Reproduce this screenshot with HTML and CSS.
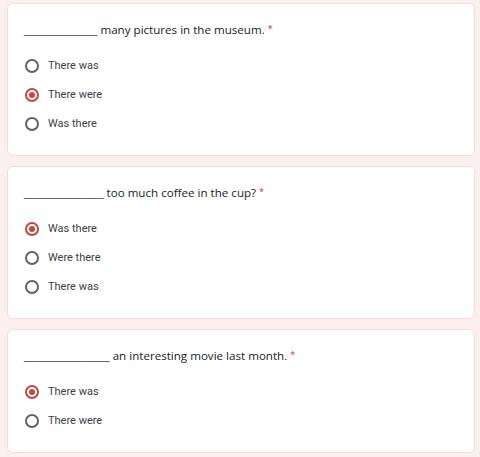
FILE: index.html
```html
<!DOCTYPE html>
<html>
<head>
<meta charset="utf-8">
<link rel="stylesheet" href="styles.css">
</head>
<body>
<div class="page">
  <div class="card">
    <div class="question"><span class="blank">____________</span> many pictures in the museum. <span class="req">*</span></div>
    <div class="options">
      <div class="option"><span class="radio"></span><span class="label">There was</span></div>
      <div class="option"><span class="radio checked"></span><span class="label">There were</span></div>
      <div class="option"><span class="radio"></span><span class="label">Was there</span></div>
    </div>
  </div>
  <div class="card">
    <div class="question"><span class="blank">_____________</span> too much coffee in the cup? <span class="req">*</span></div>
    <div class="options">
      <div class="option"><span class="radio checked"></span><span class="label">Was there</span></div>
      <div class="option"><span class="radio"></span><span class="label">Were there</span></div>
      <div class="option"><span class="radio"></span><span class="label">There was</span></div>
    </div>
  </div>
  <div class="card">
    <div class="question"><span class="blank">______________</span> an interesting movie last month. <span class="req">*</span></div>
    <div class="options">
      <div class="option"><span class="radio checked"></span><span class="label">There was</span></div>
      <div class="option"><span class="radio"></span><span class="label">There were</span></div>
    </div>
  </div>
</div>
</body>
</html>
```
FILE: styles.css
```css
html, body {
  margin: 0;
  padding: 0;
  background: #fcefef;
}
.page {
  display: flex;
  flex-direction: column;
  gap: 10px;
  padding: 3px 5px 0 7px;
}
.card {
  background: #ffffff;
  border: 1px solid #f5dcdc;
  border-radius: 6px;
  padding: 17px 16px 17px 16px;
}
.question {
  font-family: "Open Sans", sans-serif;
  font-size: 11.6px;
  line-height: 16px;
  color: #202124;
}
.blank {
  font-family: "Liberation Sans", sans-serif;
  font-size: 11px;
  color: #3c4043;
}
.req {
  color: #d93025;
  font-size: 9px;
  vertical-align: 2px;
}
.options {
  margin-top: 13px;
  display: flex;
  flex-direction: column;
}
.option {
  height: 29px;
  display: flex;
  align-items: center;
}
.radio {
  width: 10px;
  height: 10px;
  border: 2px solid #5f6368;
  border-radius: 50%;
  margin-left: 1px;
  margin-right: 9px;
  display: flex;
  align-items: center;
  justify-content: center;
  box-sizing: content-box;
}
.radio.checked {
  border-color: #c5473f;
}
.radio.checked::after {
  content: "";
  width: 6px;
  height: 6px;
  border-radius: 50%;
  background: #c5473f;
}
.label {
  font-family: Roboto, sans-serif;
  font-size: 11px;
  color: #3c4043;
}
```
